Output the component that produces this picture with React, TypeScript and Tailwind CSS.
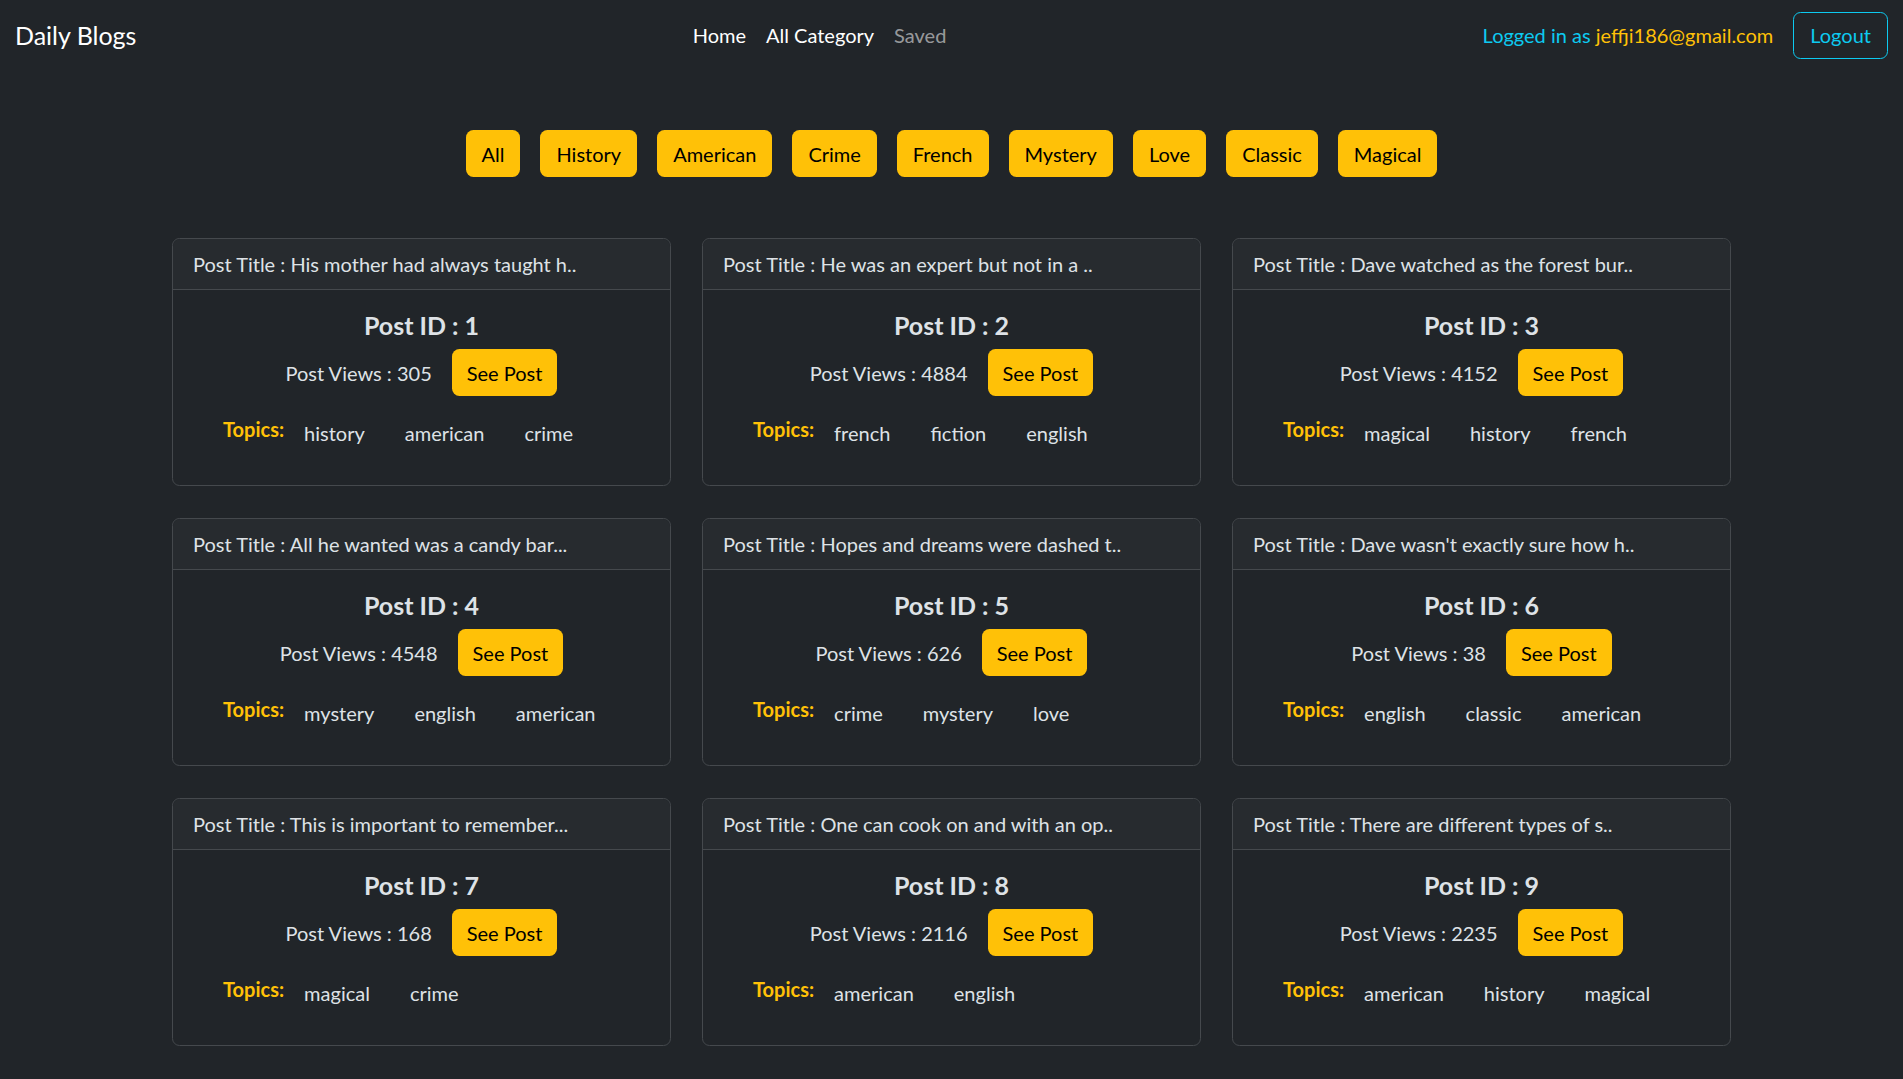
const categories = [
  "All",
  "History",
  "American",
  "Crime",
  "French",
  "Mystery",
  "Love",
  "Classic",
  "Magical",
];

const posts = [
  { id: 1, title: "His mother had always taught h..", views: 305, topics: ["history", "american", "crime"] },
  { id: 2, title: "He was an expert but not in a ..", views: 4884, topics: ["french", "fiction", "english"] },
  { id: 3, title: "Dave watched as the forest bur..", views: 4152, topics: ["magical", "history", "french"] },
  { id: 4, title: "All he wanted was a candy bar...", views: 4548, topics: ["mystery", "english", "american"] },
  { id: 5, title: "Hopes and dreams were dashed t..", views: 626, topics: ["crime", "mystery", "love"] },
  { id: 6, title: "Dave wasn't exactly sure how h..", views: 38, topics: ["english", "classic", "american"] },
  { id: 7, title: "This is important to remember...", views: 168, topics: ["magical", "crime"] },
  { id: 8, title: "One can cook on and with an op..", views: 2116, topics: ["american", "english"] },
  { id: 9, title: "There are different types of s..", views: 2235, topics: ["american", "history", "magical"] },
];

type Post = (typeof posts)[number];

const PostCard = ({ post }: { post: Post }) => {
  return (
    <div className="rounded-[7.5px] border border-[#45494d] bg-[#212529]">
      <div className="rounded-t-[7.5px] border-b border-[#45494d] bg-[#272b2f] px-5 py-[10px] text-[20px] leading-[30px] text-[#dee2e6]">
        Post Title : {post.title}
      </div>
      <div className="flex flex-col items-center pt-5 pb-[37px]">
        <h5 className="mb-[9px] text-[25px] font-bold leading-[30px] text-[#dee2e6]">
          Post ID : {post.id}
        </h5>
        <div className="flex items-center gap-5">
          <span className="text-[20px] leading-[30px] text-[#dee2e6]">
            Post Views : {post.views}
          </span>
          <button
            type="button"
            className="h-[47px] rounded-[7.5px] bg-[#ffc107] px-[15px] text-[20px] leading-[30px] text-black"
          >
            See Post
          </button>
        </div>
        <div className="mt-[22px] flex items-center self-start pl-[50px]">
          <span className="mr-5 -translate-y-1 text-[20px] font-bold leading-[30px] text-[#ffc107]">
            Topics:
          </span>
          {post.topics.map((t) => (
            <span key={t} className="mr-10 text-[20px] leading-[30px] text-[#dee2e6]">
              {t}
            </span>
          ))}
        </div>
      </div>
    </div>
  );
};

const App = () => {
  return (
    <div className="min-h-screen bg-[#212529] pb-10 font-['Lato','Segoe_UI',sans-serif]">
      <nav className="flex h-[70px] items-center px-[15px]">
        <span className="mr-5 text-[25px] leading-[36px] text-white">Daily Blogs</span>
        <ul className="mx-auto flex items-center text-[20px] leading-[30px]">
          <li className="px-[10px] text-white">Home</li>
          <li className="px-[10px] text-white">All Category</li>
          <li className="px-[10px] text-[#ffffff8c]">Saved</li>
        </ul>
        <div className="flex items-center">
          <span className="text-[20px] leading-[30px] text-[#0dcaf0]">
            Logged in as <span className="text-[#ffc107]">jeffji186@gmail.com</span>
          </span>
          <button
            type="button"
            className="ml-5 h-[47px] rounded-[7.5px] border border-[#0dcaf0] px-[16px] text-[20px] leading-[30px] text-[#0dcaf0]"
          >
            Logout
          </button>
        </div>
      </nav>

      <div className="mt-[60px] flex justify-center gap-5">
        {categories.map((c) => (
          <button
            key={c}
            type="button"
            className="h-[47px] rounded-[7.5px] bg-[#ffc107] px-4 text-[20px] leading-[30px] text-black"
          >
            {c}
          </button>
        ))}
      </div>

      <div className="mt-[61px] grid grid-cols-[repeat(3,499px)] justify-center gap-x-[31px] gap-y-[32px]">
        {posts.map((p) => (
          <PostCard key={p.id} post={p} />
        ))}
      </div>
    </div>
  );
};

export default App;
